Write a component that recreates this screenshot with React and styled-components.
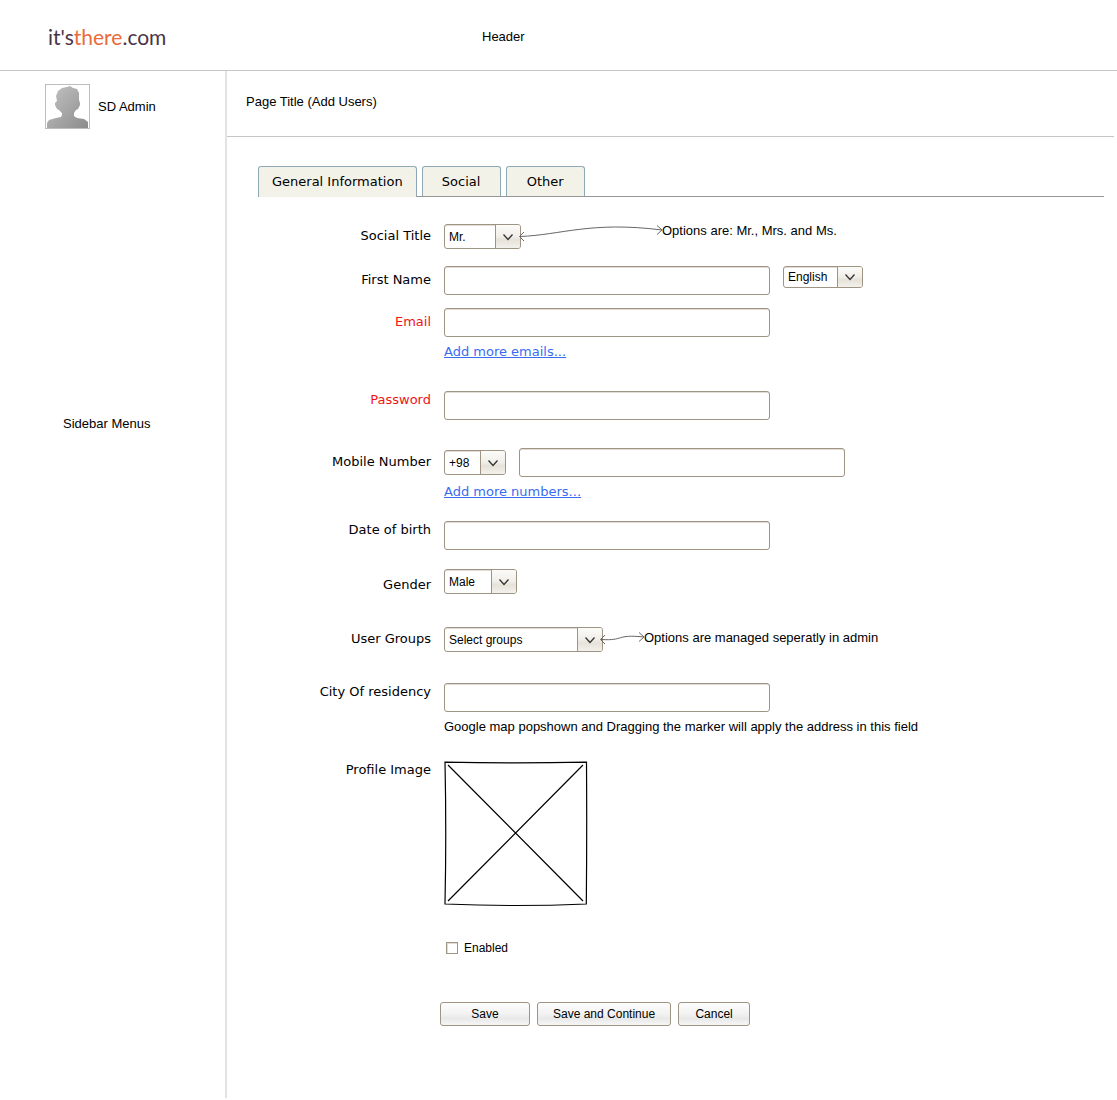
import React from 'react';
import styled, { createGlobalStyle, css } from 'styled-components';

const sans = '"Liberation Sans", Arial, sans-serif';
const verdana = '"DejaVu Sans", Verdana, sans-serif';
const edge = '#9f9384';

const GlobalStyle = createGlobalStyle`
  *, *::before, *::after { box-sizing: border-box; }
  body { margin: 0; background: #fff; color: #000; font: 13px/18px ${sans}; }
`;

const Header = styled.header`
  display: grid;
  grid-template-columns: 434px 1fr;
  align-items: center;
  height: 71px;
  padding: 4px 0 0 48px;
  border-bottom: 1px solid #c6c6c6;
`;

const Logo = styled.a`
  color: #4a3448;
  font: 21px/28px Lato, sans-serif;
  text-decoration: none;
`;

const LogoAccent = styled.span`
  color: #e96b3c;
`;

const Body = styled.div`
  display: grid;
  grid-template-columns: 227px 1fr;
`;

const Sidebar = styled.aside`
  border-right: 2px solid #e3e3e3;
  padding-top: 13px;
`;

const Profile = styled.div`
  display: flex;
  align-items: center;
  gap: 8px;
  padding-left: 45px;
`;

const Avatar = styled.svg`
  width: 45px;
  height: 45px;
  border: 1px solid #bdbdbd;
`;

const SidebarMenus = styled.nav`
  margin-top: 286px;
  padding-left: 63px;
`;

const Main = styled.main`
  padding-bottom: 72px;
`;

const PageTitle = styled.h1`
  margin: 0 3px 0 0;
  padding: 22px 19px 25px;
  border-bottom: 1px solid #c6c6c6;
  font: inherit;
`;

const Content = styled.div`
  padding: 29px 13px 0 31px;
`;

const Tabs = styled.div`
  display: flex;
  gap: 5px;
  border-bottom: 1px solid #969696;
`;

const Tab = styled.button`
  min-width: 79px;
  height: 30px;
  padding: 0 13px;
  border: 1px solid #8fa8b6;
  border-bottom: 0;
  border-radius: 3px 3px 0 0;
  background: #f3f2e9;
  color: #000;
  font: 13px/18px ${verdana};

  ${({ $active }) => $active && css`
    height: 31px;
    margin-bottom: -1px;
  `}
`;

const Form = styled.form`
  padding-top: 27px;
`;

const Row = styled.div`
  display: grid;
  grid-template-columns: 173px 1fr;
  column-gap: 13px;
  margin-bottom: ${({ $after }) => $after}px;
`;

const Label = styled.label`
  align-self: ${({ $align }) => $align || 'center'};
  justify-self: end;
  padding-bottom: ${({ $align }) => ($align ? 0 : 2)}px;
  color: ${({ $required }) => ($required ? '#f01414' : '#000')};
  font: 13px/18px ${verdana};
`;

const Controls = styled.div`
  display: flex;
  align-items: ${({ $align }) => $align || 'center'};
  gap: ${({ $gap }) => $gap || 0}px;
`;

const Below = styled.div`
  grid-column: 2;
  padding-top: 6px;
`;

const TextInput = styled.input`
  width: 326px;
  height: 29px;
  padding: 0 6px;
  border: 1px solid ${edge};
  border-radius: 3px;
  background: #fff;
  box-shadow: inset 0 1px 0 #e2dcd6;
  font: 12px/18px ${sans};
`;

const SelectBox = styled.div`
  position: relative;
  flex: none;
  width: ${({ $width }) => $width}px;
  height: ${({ $height }) => $height || 25}px;
`;

const NativeSelect = styled.select`
  appearance: none;
  width: 100%;
  height: 100%;
  padding: 0 28px 0 4px;
  border: 1px solid ${edge};
  border-radius: 3px;
  background: #fff;
  box-shadow: inset 0 1px 0 #e2dcd6;
  color: #000;
  font: 12px/18px ${sans};
`;

const SelectArrow = styled.span`
  position: absolute;
  inset: 1px 1px 1px auto;
  display: grid;
  place-items: center;
  width: 25px;
  border-left: 1px solid ${edge};
  border-radius: 0 2px 2px 0;
  background: linear-gradient(#fbfbf9, #f0eee8 50%, #e6e2d9 65%, #f3f1ec);
  pointer-events: none;
`;

const Link = styled.a`
  color: #3a6cf0;
  font: 13px/18px ${verdana};
`;

const Connector = styled.svg`
  position: relative;
  flex: none;
  width: ${({ $width }) => $width}px;
  height: 25px;
  overflow: visible;
  fill: none;
  stroke: #666;
  pointer-events: none;
`;

const Annotation = styled.span`
  line-height: 14px;
  padding-bottom: 3px;
`;

const Placeholder = styled.svg`
  width: 144px;
  height: 146px;
  fill: none;
  stroke: #000;
  stroke-width: 1.2;
`;

const CheckLabel = styled.label`
  display: flex;
  align-items: center;
  gap: 6px;
  padding-left: 2px;
  font: 12px/18px ${sans};
`;

const Checkbox = styled.input`
  appearance: none;
  width: 12px;
  height: 12px;
  margin: 0;
  border: 1px solid ${edge};
  background: #fff;
  box-shadow: inset 1px 1px 0 #e2dcd6;

  &:checked { background: ${edge}; }
`;

const Actions = styled.div`
  display: flex;
  gap: 7px;
  padding-left: 182px;
`;

const Button = styled.button`
  min-width: ${({ $wide }) => ($wide ? 90 : 72)}px;
  height: 24px;
  padding: 0 15px;
  border: 1px solid ${edge};
  border-radius: 3px;
  background: linear-gradient(#fdfdfd, #f2f2f2 50%, #e8e8e8 70%, #f6f6f6);
  color: #000;
  font: 12px/18px ${sans};
`;

function Select({ id, options, width, height, label }) {
  return (
    <SelectBox $width={width} $height={height}>
      <NativeSelect id={id} aria-label={label}>
        {options.map((option) => <option key={option}>{option}</option>)}
      </NativeSelect>
      <SelectArrow>
        <svg width="12" height="8" viewBox="0 0 12 8" fill="none" stroke="#333" strokeWidth="1.3">
          <path d="M1.5 1.5L6 6.5L10.5 1.5" />
        </svg>
      </SelectArrow>
    </SelectBox>
  );
}

export default function App() {
  return (
    <>
      <GlobalStyle />
      <Header>
        <div><Logo href="#">it's<LogoAccent>there</LogoAccent>.com</Logo></div>
        <span>Header</span>
      </Header>
      <Body>
        <Sidebar>
          <Profile>
            <Avatar viewBox="0 0 43 43" aria-hidden="true">
              <defs>
                <linearGradient id="shade" x1="0" y1="0" x2="1" y2="1">
                  <stop offset="0" stopColor="#c4c4c4" />
                  <stop offset="1" stopColor="#8c8c8c" />
                </linearGradient>
              </defs>
              <path fill="url(#shade)" d="M1 43V38L3 35L10 33L15 32L16 30V28L13 25L11 24L9 20V18L11 16L10 11L12 6L16 3L21 2L24 1L27 3L31 4L33 8V15L34 18V20L32 24L30 25L28 28V31L31 33L38 34L42 37V43Z" />
            </Avatar>
            <span>SD Admin</span>
          </Profile>
          <SidebarMenus>Sidebar Menus</SidebarMenus>
        </Sidebar>
        <Main>
          <PageTitle>Page Title (Add Users)</PageTitle>
          <Content>
            <Tabs role="tablist">
              <Tab role="tab" aria-selected="true" $active>General Information</Tab>
              <Tab role="tab" aria-selected="false">Social</Tab>
              <Tab role="tab" aria-selected="false">Other</Tab>
            </Tabs>
            <Form onSubmit={(event) => event.preventDefault()}>
              <Row $after={17}>
                <Label htmlFor="title">Social Title</Label>
                <Controls $align="flex-start">
                  <Select id="title" width={77} options={['Mr.', 'Mrs.', 'Ms.']} />
                  <Connector $width={141} viewBox="0 0 141 25" aria-hidden="true">
                    <path d="M-1 12.5C40 11 70 -3 141 6" />
                    <path d="M3 8L-1.5 12.5L3 17M136 1.5L141 6L136 10.5" />
                  </Connector>
                  <Annotation>Options are: Mr., Mrs. and Ms.</Annotation>
                </Controls>
              </Row>
              <Row $after={13}>
                <Label htmlFor="first">First Name</Label>
                <Controls $align="flex-start" $gap={13}>
                  <TextInput id="first" type="text" />
                  <Select label="Language" width={80} height={22} options={['English']} />
                </Controls>
              </Row>
              <Row $after={30}>
                <Label htmlFor="email" $required>Email</Label>
                <Controls><TextInput id="email" type="email" /></Controls>
                <Below><Link href="#">Add more emails...</Link></Below>
              </Row>
              <Row $after={28}>
                <Label htmlFor="password" $align="start" $required>Password</Label>
                <Controls><TextInput id="password" type="password" /></Controls>
              </Row>
              <Row $after={20}>
                <Label htmlFor="mobile">Mobile Number</Label>
                <Controls $gap={13}>
                  <Select label="Country code" width={62} options={['+98']} />
                  <TextInput id="mobile" type="tel" />
                </Controls>
                <Below><Link href="#">Add more numbers...</Link></Below>
              </Row>
              <Row $after={19}>
                <Label htmlFor="birth" $align="start">Date of birth</Label>
                <Controls><TextInput id="birth" type="text" /></Controls>
              </Row>
              <Row $after={33}>
                <Label htmlFor="gender" $align="end">Gender</Label>
                <Controls><Select id="gender" width={73} options={['Male', 'Female']} /></Controls>
              </Row>
              <Row $after={31}>
                <Label htmlFor="groups">User Groups</Label>
                <Controls>
                  <Select id="groups" width={159} options={['Select groups']} />
                  <Connector $width={41} viewBox="0 0 41 25" aria-hidden="true">
                    <path d="M-2 12.5C22 14 12 7 41 10" />
                    <path d="M2 8L-2.5 12.5L2 17M36 5.5L41 10L36 14.5" />
                  </Connector>
                  <Annotation>Options are managed seperatly in admin</Annotation>
                </Controls>
              </Row>
              <Row $after={25}>
                <Label htmlFor="city" $align="start">City Of residency</Label>
                <Controls><TextInput id="city" type="text" /></Controls>
                <Below>Google map popshown and Dragging the marker will apply the address in this field</Below>
              </Row>
              <Row $after={32}>
                <Label as="span" $align="start">Profile Image</Label>
                <Placeholder viewBox="0 0 144 146" role="img" aria-label="Profile image">
                  <path d="M1 1.2Q72 2.5 142.5 1.2Q143 72 142.3 143Q72 146 1 143Q2.5 72 1 1.2Z" />
                  <path d="M4 4L139 140M139 4L4 140" />
                </Placeholder>
              </Row>
              <Row $after={45}>
                <span />
                <CheckLabel><Checkbox type="checkbox" />Enabled</CheckLabel>
              </Row>
              <Actions>
                <Button type="submit" $wide>Save</Button>
                <Button type="button">Save and Continue</Button>
                <Button type="button">Cancel</Button>
              </Actions>
            </Form>
          </Content>
        </Main>
      </Body>
    </>
  );
}
